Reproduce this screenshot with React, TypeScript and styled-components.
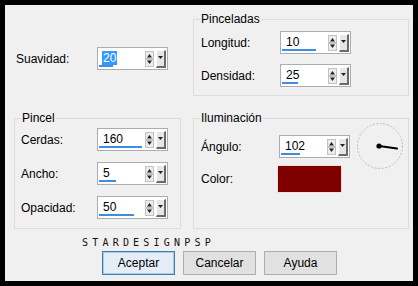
import React from "react"
import styled, { createGlobalStyle } from "styled-components"

const GlobalStyle = createGlobalStyle`
  html, body {
    margin: 0;
    padding: 0;
    background: #000;
  }
  body {
    font-family: Tahoma, "Liberation Sans", Arial, sans-serif;
    font-size: 12px;
    color: #000;
  }
`

interface SpinProps {
  value: string
  bar: number
  selected?: boolean
}

function Spin(props: SpinProps) {
  const { value, bar, selected } = props
  return (
    <SpinBox>
      <ValueCol>
        <ValueText $selected={selected}>{value}</ValueText>
        <ValueBar style={{ width: bar }} />
      </ValueCol>
      <UpDown>
        <svg width="7" height="14" viewBox="0 0 7 14">
          <path d="M3.5 2 L6 5.5 L1 5.5 Z" fill="#222" />
          <line x1="0" y1="7" x2="7" y2="7" stroke="#999" strokeWidth="1" />
          <path d="M1 8.5 L6 8.5 L3.5 12 Z" fill="#222" />
        </svg>
      </UpDown>
      <DropBtn>
        <svg width="7" height="6" viewBox="0 0 7 6">
          <path d="M1 2 L6 2 L3.5 5 Z" fill="#222" />
        </svg>
      </DropBtn>
    </SpinBox>
  )
}

function Dial() {
  return (
    <DialWrap>
      <svg width="48" height="48" viewBox="0 0 48 48">
        <circle cx="24" cy="24" r="22.5" fill="none" stroke="#bdbdbd" strokeWidth="1" strokeDasharray="2 1.5" />
        <line x1="23" y1="24" x2="41" y2="26.5" stroke="#000" strokeWidth="2.2" strokeLinecap="round" />
        <circle cx="23" cy="24" r="2.6" fill="#000" />
      </svg>
    </DialWrap>
  )
}

export default function App() {
  return (
    <>
      <GlobalStyle />
      <Dialog>
        <Main>
          <TopLeft>
            <Label>Suavidad:</Label>
            <Spin value="20" bar={14} selected />
          </TopLeft>

          <Group>
            <Legend>Pinceladas</Legend>
            <FieldGrid $top={5} $left={7} $label={79} $gap={10}>
              <Label>Longitud:</Label>
              <Spin value="10" bar={34} />
              <Label>Densidad:</Label>
              <Spin value="25" bar={16} />
            </FieldGrid>
          </Group>

          <Group>
            <Legend>Pincel</Legend>
            <FieldGrid $top={3} $left={6} $label={76} $gap={11}>
              <Label>Cerdas:</Label>
              <Spin value="160" bar={43} />
              <Label>Ancho:</Label>
              <Spin value="5" bar={17} />
              <Label>Opacidad:</Label>
              <Spin value="50" bar={35} />
            </FieldGrid>
          </Group>

          <Group>
            <Legend>Iluminación</Legend>
            <LightRow>
              <FieldGrid $top={10} $left={7} $label={78} $gap={8}>
                <Label>Ángulo:</Label>
                <Spin value="102" bar={19} />
                <Label>Color:</Label>
                <Swatch $color="#800000" />
              </FieldGrid>
              <Dial />
            </LightRow>
          </Group>
        </Main>

        <Footer>
          <Brand>STARDESIGNPSP</Brand>
          <Buttons>
            <Button $primary>Aceptar</Button>
            <Button>Cancelar</Button>
            <Button>Ayuda</Button>
          </Buttons>
        </Footer>
      </Dialog>
    </>
  )
}

const Dialog = styled.div`
  margin: 5px;
  width: 408px;
  height: 276px;
  background: #f0f0f0;
  display: flex;
  flex-direction: column;
  box-sizing: border-box;
`

const Main = styled.div`
  display: grid;
  grid-template-columns: 167px 216px;
  grid-template-rows: 84px 118px;
  column-gap: 12px;
  row-gap: 15px;
  padding: 7px 0 0 9px;
`

const TopLeft = styled.div`
  display: grid;
  grid-template-columns: 81px 71px;
  align-items: center;
  align-self: start;
  padding: 35px 0 0 2px;
`

const Group = styled.fieldset`
  margin: 0;
  padding: 0;
  min-width: 0;
  border: 1px solid #dcdcdc;
  box-sizing: border-box;
`

const Legend = styled.legend`
  margin-left: 6px;
  padding: 0 1px;
  font-size: 12px;
  line-height: 14px;
`

const FieldGrid = styled.div<{ $top: number; $left: number; $label: number; $gap: number }>`
  display: grid;
  grid-template-columns: ${p => p.$label}px 71px;
  row-gap: ${p => p.$gap}px;
  align-items: center;
  padding: ${p => p.$top}px 0 0 ${p => p.$left}px;
`

const Label = styled.span`
  font-size: 12px;
  line-height: 14px;
  white-space: nowrap;
`

const SpinBox = styled.div`
  display: flex;
  align-items: center;
  width: 71px;
  height: 23px;
  box-sizing: border-box;
  border: 1px solid #abadb3;
  background: #fff;
  padding: 0 1px 0 1px;
`

const ValueCol = styled.div`
  flex: 1;
  align-self: stretch;
  display: flex;
  flex-direction: column;
  justify-content: space-between;
  padding: 2px 0 2px 0;
`

const ValueText = styled.span<{ $selected?: boolean }>`
  align-self: flex-start;
  margin: 1px 0 0 3px;
  padding: 0 1px;
  font-size: 12px;
  line-height: 14px;
  background: ${p => (p.$selected ? "#3399ff" : "transparent")};
  color: ${p => (p.$selected ? "#fff" : "#000")};
`

const ValueBar = styled.div`
  height: 2px;
  background: #3c8fe0;
`

const UpDown = styled.div`
  width: 9px;
  height: 16px;
  box-sizing: border-box;
  border: 1px solid #c2c2c2;
  background: #ececec;
  display: flex;
  align-items: center;
  justify-content: center;
  margin-right: 2px;
`

const DropBtn = styled.div`
  width: 10px;
  height: 18px;
  box-sizing: border-box;
  border-top: 1px solid #fff;
  border-left: 1px solid #fff;
  border-right: 2px solid #6a6a6a;
  border-bottom: 2px solid #6a6a6a;
  background: #e6e6e6;
  display: flex;
  align-items: flex-start;
  justify-content: center;
  padding-top: 3px;
  margin-top: 1px;
`

const Swatch = styled.div<{ $color: string }>`
  width: 63px;
  height: 26px;
  margin-left: -1px;
  background: ${p => p.$color};
  box-shadow: 0 0 0 1px #f6dcdc;
`

const LightRow = styled.div`
  display: flex;
  align-items: flex-start;
`

const DialWrap = styled.div`
  width: 48px;
  height: 48px;
  margin: -3px 0 0 6px;
`

const Footer = styled.div`
  display: flex;
  flex-direction: column;
  padding-top: 8px;
`

const Brand = styled.div`
  margin-left: 77px;
  font-family: "DejaVu Sans Mono", "Liberation Mono", monospace;
  font-size: 10px;
  line-height: 11px;
  letter-spacing: 4.2px;
  color: #111;
`

const Buttons = styled.div`
  display: flex;
  gap: 8px;
  margin: 3px 0 0 97px;
`

const Button = styled.button<{ $primary?: boolean }>`
  width: 73px;
  height: 24px;
  box-sizing: border-box;
  padding: 0;
  font-family: Tahoma, "Liberation Sans", Arial, sans-serif;
  font-size: 12px;
  color: #000;
  background: ${p => (p.$primary ? "#e5eef7" : "#e1e1e1")};
  border: 1px solid ${p => (p.$primary ? "#3c7fb1" : "#adadad")};
  box-shadow: ${p => (p.$primary ? "inset 0 0 0 1px #a9cbe8" : "none")};
  border-radius: 0;
`
